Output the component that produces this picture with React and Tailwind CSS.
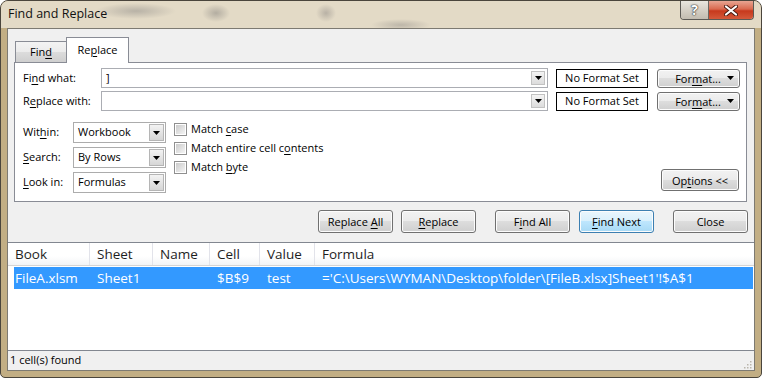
import React from 'react';

// small black down-pointing triangle used on combo and menu buttons
const Arrow = () => (
  <svg width="7" height="4" viewBox="0 0 7 4">
    <path d="M0 0h7L3.5 4z" fill="#000" />
  </svg>
);

const U = ({ children }) => <span className="underline underline-offset-[2px] decoration-[1px]">{children}</span>;

function WinButton({ children, focused, className = '' }) {
  return (
    <button
      className={`rounded-[3px] border text-[11px] leading-none flex items-center justify-center shadow-[inset_0_0_0_1px_#fcfcfc] ${
        focused
          ? 'border-[#3c7fb1] bg-[linear-gradient(to_bottom,#eaf6fd,#d9f0fc_49%,#bee6fd_50%,#a7d9f5)]'
          : 'border-[#707070] bg-[linear-gradient(to_bottom,#f2f2f2,#ebebeb_49%,#dddddd_50%,#cfcfcf)]'
      } ${className}`}
    >
      {children}
    </button>
  );
}

function TextCombo({ value }) {
  return (
    <div className="flex-1 h-[20px] border border-[#abadb3] bg-white flex items-center">
      <span className="flex-1 pl-[4px] text-[11px]">{value}</span>
      <div className="w-[14px] h-[14px] mr-[2px] border border-[#c2c2c2] bg-[linear-gradient(to_bottom,#f4f4f4,#dcdcdc)] flex items-center justify-center">
        <Arrow />
      </div>
    </div>
  );
}

function Select({ value }) {
  return (
    <div className="w-[93px] h-[21px] border border-[#acacac] bg-white flex items-stretch">
      <span className="flex-1 pl-[4px] text-[11px] flex items-center">{value}</span>
      <div className="w-[15px] m-[1px] border border-[#b5b5b5] bg-[linear-gradient(to_bottom,#f3f3f3,#d6d6d6)] flex items-center justify-center">
        <Arrow />
      </div>
    </div>
  );
}

function Check({ children }) {
  return (
    <div className="h-[19px] flex items-center gap-[4px] text-[11px]">
      <div className="w-[13px] h-[13px] border border-[#8f8f8f] bg-white p-[1px]">
        <div className="w-full h-full bg-[linear-gradient(135deg,#cbcbcb,#f4f4f4)]" />
      </div>
      <span>{children}</span>
    </div>
  );
}

const cols = ['w-[82px]', 'w-[63px]', 'w-[57px]', 'w-[50px]', 'w-[55px]', 'flex-1'];

export default function App() {
  const headers = ['Book', 'Sheet', 'Name', 'Cell', 'Value', 'Formula'];
  const row = ['FileA.xlsm', 'Sheet1', '', '$B$9', 'test', "='C:\\Users\\WYMAN\\Desktop\\folder\\[FileB.xlsx]Sheet1'!$A$1"];

  return (
    <div className="w-[762px] h-[378px] bg-white">
      <div className="w-full h-full flex flex-col rounded-t-[8px] rounded-b-[5px] border border-[#4a453c] bg-[#c2ae84] font-['Open_Sans',sans-serif] text-black overflow-hidden">
        {/* title bar */}
        <div className="h-[27px] flex items-start shrink-0 bg-[radial-gradient(ellipse_40px_8px_at_135px_10px,#b8b2a6,transparent),radial-gradient(ellipse_14px_9px_at_215px_12px,#b3ada1,transparent),radial-gradient(ellipse_10px_9px_at_325px_12px,#b8b1a5,transparent),radial-gradient(ellipse_30px_6px_at_400px_24px,#bdb6a9,transparent)] bg-[#e3dac6]">
          <span className="ml-[7px] mt-[5px] text-[12.5px] leading-[16px] text-[#111]">Find and Replace</span>
          <div className="ml-auto mr-[7px] flex h-[19px] rounded-b-[4px] border border-t-0 border-[#5c5a55] overflow-hidden">
            <div className="w-[28px] flex items-center justify-center border-r border-[#6b6862] bg-[linear-gradient(to_bottom,#e9e6df,#d5d0c6_50%,#c2bcb0)]">
              <span className="text-[14px] leading-none font-bold text-white [text-shadow:0_0_1px_#333,0_0_1px_#333,0_0_2px_#555]">?</span>
            </div>
            <div className="w-[44px] flex items-center justify-center bg-[linear-gradient(to_bottom,#e8a592,#d9694f_45%,#c7391d_55%,#d4593a)]">
              <svg width="14" height="11" viewBox="0 0 14 11">
                <path d="M2 1.5l10 8M12 1.5l-10 8" stroke="#4a1a10" strokeWidth="4" strokeLinecap="round" />
                <path d="M2 1.5l10 8M12 1.5l-10 8" stroke="#fff" strokeWidth="2.2" strokeLinecap="round" />
              </svg>
            </div>
          </div>
        </div>

        {/* client area */}
        <div className="mx-[6px] mb-[6px] flex-1 flex flex-col bg-[#f0f0f0] border border-[#7d7a72]">
          {/* tabs */}
          <div className="mt-[8px] ml-[6px] h-[25px] flex items-end shrink-0 relative z-10">
            <div className="ml-[1px] w-[52px] h-[21px] border border-b-0 border-[#898c95] bg-[linear-gradient(to_bottom,#f3f3f3,#ebebeb_50%,#dcdcdc_51%,#cfcfcf)] text-[11px] flex items-center justify-center">
              Fin<U>d</U>
            </div>
            <div className="-ml-[1px] w-[63px] h-[26px] -mb-[1px] border border-b-0 border-[#898c95] bg-white text-[11px] flex items-start justify-center pt-[4px]">
              Re<U>p</U>lace
            </div>
          </div>

          {/* tab panel */}
          <div className="ml-[6px] mr-[7px] h-[140px] shrink-0 border border-[#898c95] bg-white flex flex-col">
            <div className="mt-[5px] h-[20px] pl-[8px] pr-[6px] flex items-center text-[11px]">
              <span className="w-[78px]">Fi<U>n</U>d what:</span>
              <TextCombo value="]" />
              <div className="ml-[8px] w-[92px] h-[19px] border border-black flex items-center justify-center">No Format Set</div>
              <WinButton className="ml-[9px] w-[83px] h-[19px] gap-[6px] pl-[12px]">
                <span>For<U>m</U>at...</span>
                <Arrow />
              </WinButton>
            </div>
            <div className="mt-[3px] h-[20px] pl-[8px] pr-[6px] flex items-center text-[11px]">
              <span className="w-[78px]">R<U>e</U>place with:</span>
              <TextCombo value="" />
              <div className="ml-[8px] w-[92px] h-[19px] border border-black flex items-center justify-center">No Format Set</div>
              <WinButton className="ml-[9px] w-[83px] h-[19px] gap-[6px] pl-[12px]">
                <span>For<U>m</U>at...</span>
                <Arrow />
              </WinButton>
            </div>

            <div className="mt-[11px] pl-[8px] pr-[7px] flex items-start text-[11px]">
              <div className="flex flex-col gap-[4px]">
                <div className="flex items-center">
                  <span className="w-[50px]">Wit<U>h</U>in:</span>
                  <Select value="Workbook" />
                </div>
                <div className="flex items-center">
                  <span className="w-[50px]"><U>S</U>earch:</span>
                  <Select value="By Rows" />
                </div>
                <div className="flex items-center">
                  <span className="w-[50px]"><U>L</U>ook in:</span>
                  <Select value="Formulas" />
                </div>
              </div>
              <div className="ml-[8px] -mt-[2px] flex flex-col">
                <Check>Match <U>c</U>ase</Check>
                <Check>Match entire cell c<U>o</U>ntents</Check>
                <Check>Match <U>b</U>yte</Check>
              </div>
              <WinButton className="ml-auto self-end mb-[2px] w-[78px] h-[22px]">
                <span>Op<U>t</U>ions &lt;&lt;</span>
              </WinButton>
            </div>
          </div>

          {/* action buttons */}
          <div className="mt-[8px] mr-[6px] flex justify-end shrink-0">
            <WinButton className="w-[75px] h-[23px]"><span>Replace <U>A</U>ll</span></WinButton>
            <WinButton className="ml-[8px] w-[75px] h-[23px]"><span><U>R</U>eplace</span></WinButton>
            <WinButton className="ml-[19px] w-[75px] h-[23px]"><span>F<U>i</U>nd All</span></WinButton>
            <WinButton focused className="ml-[9px] w-[75px] h-[23px]"><span><U>F</U>ind Next</span></WinButton>
            <WinButton className="ml-[19px] w-[75px] h-[23px]"><span>Close</span></WinButton>
          </div>

          {/* results list */}
          <div className="mt-[9px] h-[109px] shrink-0 border-y border-[#828790] bg-white flex flex-col">
            <div className="h-[23px] flex border-b border-[#d5d5d5] bg-[linear-gradient(to_bottom,#ffffff,#ffffff_60%,#f3f4f6)] text-[13.5px] text-[#1e1e1e]">
              {headers.map((h, i) => (
                <div key={h} className={`${cols[i]} flex items-center pl-[7px] ${i < 5 ? 'border-r border-[#e2e3ea]' : ''}`}>
                  {h}
                </div>
              ))}
            </div>
            <div className="mt-[1px] ml-[6px] mr-[1px] h-[22px] flex bg-[#3399ff] text-[13.5px] text-white">
              {row.map((c, i) => (
                <div key={i} className={`${i === 0 ? 'w-[76px] pl-[1px]' : cols[i] + ' pl-[7px]'} flex items-center whitespace-nowrap`}>
                  {c}
                </div>
              ))}
            </div>
          </div>

          {/* status bar */}
          <div className="flex-1 flex items-center pl-[2px] pr-[2px] text-[11px]">
            <span>1 cell(s) found</span>
            <svg className="ml-auto self-end mb-[1px]" width="9" height="9" viewBox="0 0 9 9">
              <g fill="#b9b5ac">
                <rect x="7" y="1" width="1.5" height="1.5" />
                <rect x="4" y="4" width="1.5" height="1.5" />
                <rect x="7" y="4" width="1.5" height="1.5" />
                <rect x="1" y="7" width="1.5" height="1.5" />
                <rect x="4" y="7" width="1.5" height="1.5" />
                <rect x="7" y="7" width="1.5" height="1.5" />
              </g>
            </svg>
          </div>
        </div>
      </div>
    </div>
  );
}
